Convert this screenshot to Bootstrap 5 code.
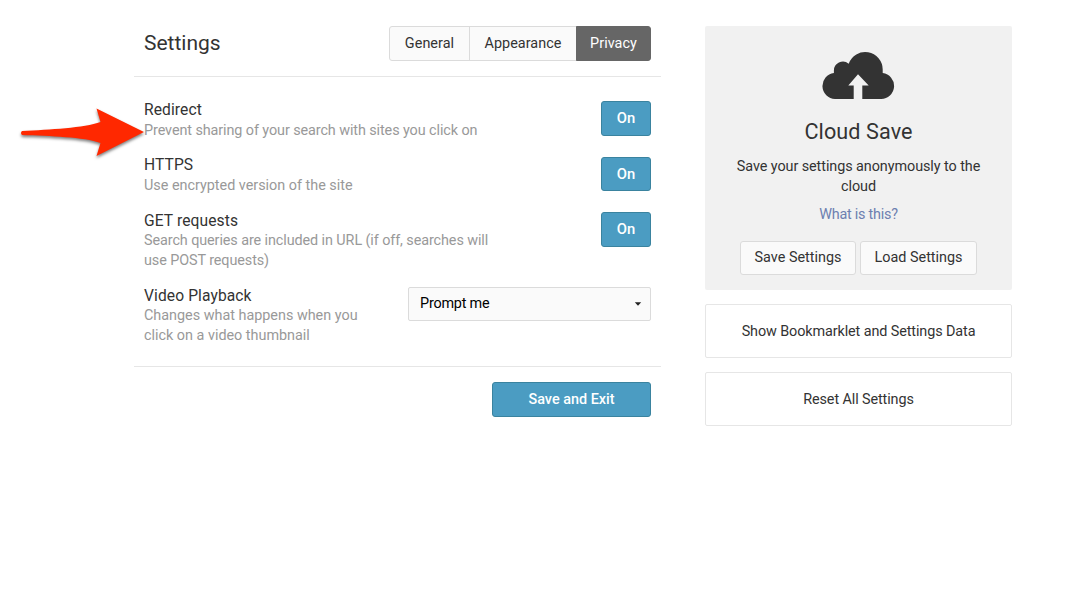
<!DOCTYPE html>
<html lang="en">
<head>
<meta charset="utf-8">
<title>Settings</title>
<link href="https://cdn.jsdelivr.net/npm/bootstrap@5.3.0/dist/css/bootstrap.min.css" rel="stylesheet">
<style>
body{font-family:Roboto,"Liberation Sans",sans-serif;font-size:14.4px;line-height:20px;color:#333;background:#fff;overflow:hidden}
.page{padding:26px 60px 0 134px;gap:44px}
.settings{width:527px}
.sidebar{width:307px;gap:14px}
.rule-b{border-bottom:1px solid #e6e6e6}
.head{height:51px;padding:0 10px 15px}
.title{font-size:21px;line-height:35px;font-weight:400;margin:0}
.btn{--bs-btn-font-size:14.4px;--bs-btn-line-height:20px;--bs-btn-border-radius:3px;--bs-btn-padding-x:0;--bs-btn-padding-y:0;height:35px}
.btn-plain{--bs-btn-bg:#fafafa;--bs-btn-border-color:#dbdbdb;--bs-btn-color:#333}
.btn-plain.active{--bs-btn-active-bg:#666;--bs-btn-active-border-color:#666;--bs-btn-active-color:#fff}
.btn-blue{--bs-btn-bg:#4b9cc2;--bs-btn-border-color:#3a839f;--bs-btn-color:#fff;font-weight:500}
.tab-a{width:81px}.tab-b{width:108px}.tab-c{width:75px}
.tab-a,.tab-b,.tab-c{letter-spacing:.05px}
.list{padding:23px 10px 20.6px}
.opt{margin-bottom:15.4px}
.opt:nth-child(3){margin-bottom:14.8px}
.opt:last-child{margin-bottom:0}
.name{font-size:15.6px;letter-spacing:.1px}
.desc{color:#999;letter-spacing:-.09px;padding-top:.5px;margin-bottom:-.5px}
.desc-even{letter-spacing:-.01px}
.on{width:50px;height:34.6px;margin-top:1.4px;--bs-btn-font-size:14.8px;padding-bottom:1px}
.pick{width:243px;height:34px;margin-top:1.4px;background:#fafafa;border:1px solid #dbdbdb;border-radius:2px;color:#000;padding:1px 8px 0 11px;letter-spacing:-.2px}
.foot{padding:15px 10px 0}
.save{width:159px}
.cloud-box{background:#f1f1f1;border-radius:2px;height:264px;padding-top:26px;letter-spacing:-.07px}
.cloud-title{font-size:21.6px;line-height:26px;font-weight:400;margin:20px 0 12px;letter-spacing:.1px}
.about{color:#6d7fb0;margin:8px 0 16px;letter-spacing:-.25px}
.cloud-box .btn{height:34px}
.save-set{width:116px}.load-set{width:117px}
.panel{height:54px;border:1px solid #e6e6e6;border-radius:2px;padding-top:1px;letter-spacing:-.1px}
.pointer{left:14px;top:100px}
</style>
</head>
<body>
<div class="page d-flex align-items-start">
  <main class="settings">
    <header class="head rule-b d-flex justify-content-between">
      <h1 class="title">Settings</h1>
      <div class="btn-group">
        <button class="btn btn-plain tab-a">General</button>
        <button class="btn btn-plain tab-b">Appearance</button>
        <button class="btn btn-plain active tab-c">Privacy</button>
      </div>
    </header>
    <section class="list rule-b">
      <div class="opt d-flex justify-content-between align-items-start">
        <div><div class="name">Redirect</div><div class="desc">Prevent sharing of your search with sites you click on</div></div>
        <button class="btn btn-blue on">On</button>
      </div>
      <div class="opt d-flex justify-content-between align-items-start">
        <div><div class="name">HTTPS</div><div class="desc desc-even">Use encrypted version of the site</div></div>
        <button class="btn btn-blue on">On</button>
      </div>
      <div class="opt d-flex justify-content-between align-items-start">
        <div><div class="name">GET requests</div><div class="desc">Search queries are included in URL (if off, searches will<br>use POST requests)</div></div>
        <button class="btn btn-blue on">On</button>
      </div>
      <div class="opt d-flex justify-content-between align-items-start">
        <div><div class="name">Video Playback</div><div class="desc desc-even">Changes what happens when you<br>click on a video thumbnail</div></div>
        <div class="pick d-flex align-items-center justify-content-between"><span>Prompt me</span>
          <svg width="8" height="4" viewBox="0 0 8 4"><path d="M.8 .3h6.4L4 3.8z" fill="#222"/></svg></div>
      </div>
    </section>
    <footer class="foot d-flex justify-content-end"><button class="btn btn-blue save">Save and Exit</button></footer>
  </main>
  <aside class="sidebar d-flex flex-column">
    <section class="cloud-box text-center">
      <svg class="d-block mx-auto" width="73" height="47" viewBox="0 0 73 47"><path fill="#333" d="M13 47A13 13 0 0 1 11.9 21.1V19A9 9 0 0 1 26.7 11.7 17.5 17.5 0 0 1 60.7 17.5V21.1A13 13 0 0 1 59 47H40.3V33.5H46.7L36 22.3 26.3 33.5H31.7V47z"/></svg>
      <h2 class="cloud-title">Cloud Save</h2>
      <div>Save your settings anonymously to the<br>cloud</div>
      <div class="about">What is this?</div>
      <div class="d-flex justify-content-center gap-1"><button class="btn btn-plain save-set">Save Settings</button><button class="btn btn-plain load-set">Load Settings</button></div>
    </section>
    <div class="panel d-flex align-items-center justify-content-center">Show Bookmarklet and Settings Data</div>
    <div class="panel d-flex align-items-center justify-content-center">Reset All Settings</div>
  </aside>
</div>
<svg class="pointer position-absolute" width="136" height="66" viewBox="14 100 136 66"><path fill="#ff2800" style="filter:drop-shadow(0 2px 1.5px rgba(0,0,0,.5))" d="M22 131C50 129.5 84 128 100.500 122L96.500 108.500 144 132 96.500 156 100.500 143C84 137 50 136 22 135Q20 133 22 131z"/></svg>
</body>
</html>
